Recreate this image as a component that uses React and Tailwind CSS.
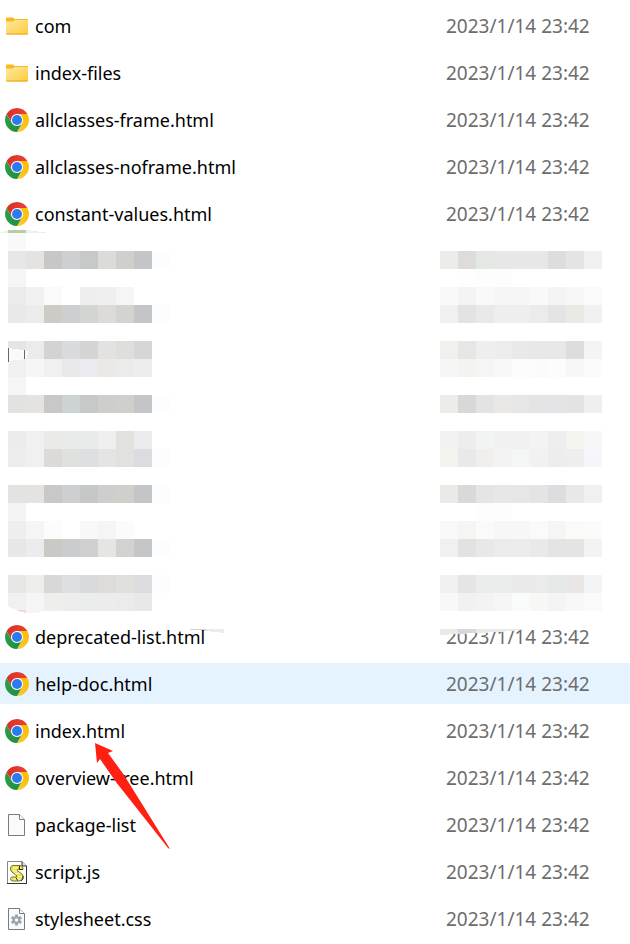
import React from "react";

const DATE = "2023/1/14 23:42";
const CELL = 18;

// ── File icons ────────────────────────────────────────────────────────────────
const FolderIcon = () => (
  <svg width="24" height="24" viewBox="0 0 24 24" aria-hidden="true">
    <defs>
      <linearGradient id="folder" x1="0" y1="0" x2="1" y2="1">
        <stop offset="0" stopColor="#ffe9a3" />
        <stop offset="1" stopColor="#ffca3a" />
      </linearGradient>
    </defs>
    <path d="M1 4.500Q1 3.500 2 3.500H8L9.500 5H22Q23 5 23 6V12H1Z" fill="#f9b81e" />
    <path d="M1 7.500H8L9.500 6H23V19.500Q23 20.500 22 20.500H2Q1 20.500 1 19.500Z" fill="url(#folder)" />
    <path d="M1 19.500H23Q23 20.500 22 20.500H2Q1 20.500 1 19.500Z" fill="#e9a31c" />
  </svg>
);

const ChromeIcon = () => (
  <svg width="24" height="24" viewBox="0 0 48 48" aria-hidden="true">
    <defs>
      <linearGradient id="chrome-red" x1="0" y1="0" x2="1" y2="0">
        <stop offset="0" stopColor="#d93025" />
        <stop offset="1" stopColor="#ea4335" />
      </linearGradient>
      <linearGradient id="chrome-yellow" x1="0" y1="1" x2="1" y2="0">
        <stop offset="0" stopColor="#fcc934" />
        <stop offset="1" stopColor="#fbbc04" />
      </linearGradient>
      <linearGradient id="chrome-green" x1="1" y1="1" x2="0" y2="0">
        <stop offset="0" stopColor="#1e8e3e" />
        <stop offset="1" stopColor="#2f9e4d" />
      </linearGradient>
    </defs>
    <circle cx="24" cy="24" r="12.500" fill="#fff" />
    <path d="M3.220 12A24 24 0 0 1 44.780 12H24A12 12 0 0 0 13.610 30Z" fill="url(#chrome-red)" />
    <path d="M44.780 12A24 24 0 0 1 24 48L34.390 30A12 12 0 0 0 24 12Z" fill="url(#chrome-yellow)" />
    <path d="M24 48A24 24 0 0 1 3.220 12L13.610 30A12 12 0 0 0 34.390 30Z" fill="url(#chrome-green)" />
    <circle cx="24" cy="24" r="10" fill="#2a7bf0" />
  </svg>
);

const Page = () => (
  <>
    <path d="M3.500 1.500H14.500L19.500 6.500V22.500H3.500Z" fill="#fafafa" stroke="#7b7b7b" />
    <path d="M14.500 1.500V6.500H19.500" fill="#fff" stroke="#7b7b7b" />
  </>
);

const BlankIcon = () => (
  <svg width="24" height="24" viewBox="0 0 24 24" aria-hidden="true">
    <Page />
  </svg>
);

const ScriptIcon = () => (
  <svg width="24" height="24" viewBox="0 0 24 24" aria-hidden="true">
    <path d="M2.500 1.500H17L21.500 6V23.500H2.500Z" fill="#fff" stroke="#888" />
    <path d="M17 1.500V6H21.500" fill="#ddd" stroke="#333" />
    <path d="M2 23.500H22M21.500 6V24" fill="none" stroke="#333" />
    <path
      d="M8 5.500H15Q18 5.500 18 8.500V9.500H14.500L13 9L12 10.500L17 14Q19 16 17.500 19Q16.500 21 14 21H8Q5.500 21 5.500 18.500Q5.500 17 8 17H11L12 16L7 12Q5 10 5.500 8Q6 5.500 8 5.500Z"
      fill="#e9e35c"
      stroke="#77752c"
    />
    <path d="M8 8H13M8 11H12M10 13.500H15M13 16.500H17M9 19H15" fill="none" stroke="#fffcae" />
    <path d="M14.500 6V9.500H18M11 17.500L12.500 20.500M18 16V19L16 21" fill="none" stroke="#33331d" />
  </svg>
);

const StyleIcon = () => (
  <svg width="24" height="24" viewBox="0 0 24 24" aria-hidden="true">
    <Page />
    <g stroke="#98a3b0" strokeWidth="2.800">
      <path d="M11.500 7.500V18.500M6.700 10.200L16.300 15.800M16.300 10.200L6.700 15.800" />
    </g>
    <circle cx="11.500" cy="13" r="3.800" fill="#98a3b0" />
    <circle cx="11.500" cy="13" r="1.700" fill="#fafafa" />
  </svg>
);

// ── Pixelated blocks, one string per 18px line, one colour per block ─────────
const NAME_BLOCKS = [
  "f8f9f8",
  "e7e7e7 e4e3e1 c9c7c5 cdcfd1 c7c9c8 dddbd9 cfcfcc c4c5c8 fcfdff",
  "f5f5f5",
  "ebebeb f1f1f1 fafafa ffffff eeeeee efefef f5f5f5",
  "e9e9e7 ececec cccbc6 cdcfd1 d3d5d3 dddbd9 d3d3d0 c4c5c8 fcfdff",
  "",
  "e5e5e3 ebebeb d4d3d1 d8dade d4d4d4 e2e2e0 dededc d6d6d9",
  "f0f0f0 f6f6f6 f0f0f0 e9e9ec e9ebee ebe8e6 ebebeb ededed",
  "f5f5f5",
  "e2e2e0 e4e3e1 c9c8c6 cdd2d4 c7c9c8 d0cecc cfcfcb c4c5c8 fcfdff",
  "",
  "ebebeb f0f0f0 eaeae7 e9eaea e8ebea efefef e1e1df ebebee",
  "ededeb f0f0f0 dcdad8 dfe1df dedfe2 e4e4e4 e1e1df dadcdf fdfdff",
  "",
  "e3e4e2 e4e3e1 c9c8c6 cdcfd1 c5c8c7 d0cecc cfcfcc c4c5c8 fcfdff",
  "f4f4f4",
  "eeeeee f6f4f5 fcfcfc ffffff f8f8f8 f5f5f5 fbfbfb",
  "e7e7e7 ececec cacac4 cacccd d0d0d0 e5e5e3 d2d2d0 c5c6c8 fcfdff",
  "",
  "e6e7e5 eeeeec d9d8d6 dde0e2 d9dadb dddcda e0e0de dadcde fdfdff",
  "f0f0f0 f5f5f5 eeeeec ecedec ebeded ececec ebebeb e8e8e8",
];

const DATE_BLOCKS = [
  "",
  "ecece9 dedcda e4e8e5 e7e7e7 e7e7e7 e7e7e7 dbdedd e5e4e2 eff1f0",
  "ffffff fefefe fdfdfd fdfdfd",
  "f9f9f9 f4f4f4 f9f9f9 f5f5f5 f5f5f5 f9f9f9 f4f4f4 f7f7f5 fafafa",
  "f0f0ee e3e3e3 e9e9e9 eeeeee eeeeee ebebeb e4e4e4 e9e9e6 f1f1f1",
  "",
  "f0f0ed e6e6e6 eeeeee ededed e9e9e9 e8e8e8 e8e8e8 dddddd f4f4f4",
  "f6f6f6 f4f3f0 f5f5f5 f8f8f8 fcfcfc fbfbfb fcfcfc f7f7f7 fafcfb",
  "",
  "ebebe8 d8d8d8 e3e3e3 e9e8e5 e6e6e6 e4e4e4 e2e4e7 e3e3e3 eef0ef",
  "",
  "f0f3f2 ededed f1f4f3 f1f1f1 f1f1f1 f3f3f3 eeeeee f4f4f1 f7f7f7",
  "f4f3f0 e9e9e9 f0efec f3f3f3 f3f6f5 f1f1f1 ededed eeeeee f4f6f9",
  "",
  "ebeae7 d9d9d9 e3e6e4 e7e7e7 e6e6e6 e4e4e4 dcdde0 e9e7e8 eff1f0",
  "ffffff ffffff fdfdfd fdfdfd",
  "f9f9f9 f6f5f2 fafafa f7f7f7 f7f7f7 fafafa f5f5f5 fafaf7 fbfbfb",
  "f0f0f0 e2e2e2 e8e8e8 ebebeb ececec e9e9e9 e4e4e4 e4e4e4 f3f3f3",
  "",
  "f1f1f1 e5e5e5 ebedec ebedec eaeaea ebebeb e6e9e8 e8e7e5 f2f4f6",
  "f8f8f8 f1f1f1 f3f3f3 f6f6f6 fafcfb f7f7f5 f4f4f4 f8f8f8 fafafa",
];

const Blocks = ({ rows, x, y }) =>
  rows.flatMap((row, r) =>
    row.split(" ").filter(Boolean).map((color, c) => (
      <rect
        key={`${r}-${c}`}
        x={x + c * CELL}
        y={y + r * CELL}
        width={CELL}
        height={CELL}
        fill={`#${color}`}
      />
    ))
  );

// Both masks spill a little over the rows above and below them
const NameMask = () => (
  <svg className="absolute -top-2 left-0" width="240" height="412" shapeRendering="crispEdges" aria-hidden="true">
    <Blocks rows={NAME_BLOCKS} x={8} y={4} />
    <path d="M0 4L8 1H26L50 4Z" fill="#edf0ea" />
    <path d="M8 1H26V4H8Z" fill="#b8cda5" />
    <path d="M8 119L29 122L26 130L8 132Z" fill="#fafafa" />
    <path d="M8 119H9V133H8ZM24 121H25V130H24Z" fill="#666" />
    <path d="M8 378L22 382H8Z" fill="#fff" />
    <path d="M15 381H26V384Z" fill="#f7d9da" />
    <path d="M26 382H42L38 384H26Z" fill="#f5f5f5" />
    <path d="M185 396H224V403L206 401Z" fill="#fff" />
    <path d="M185 400H206V402Z" fill="#d2d2d2" />
    <path d="M206 400H224V404L206 402Z" fill="#ebebeb" />
  </svg>
);

const DateMask = () => (
  <svg className="absolute -top-2 -left-[6px]" width="170" height="412" shapeRendering="crispEdges" aria-hidden="true">
    <Blocks rows={DATE_BLOCKS} x={0} y={4} />
    <path d="M0 396H88V400L60 403L0 406Z" fill="#fff" />
    <path d="M0 400H18V405L0 406Z" fill="#e9e9e7" />
    <path d="M18 400H36V404L18 405Z" fill="#d8d8d8" />
    <path d="M36 400H88L60 403L36 404Z" fill="#e9e9e9" />
  </svg>
);

// ── Red pointer at index.html ─────────────────────────────────────────────────
const Arrow = () => (
  <svg className="absolute left-[95px] top-[33px] z-10" width="76" height="107" aria-hidden="true">
    <path d="M0 0L18 8L13 10L29 32L75 106L73 105L21 39L5 16L2 20Z" fill="#ff2014" />
  </svg>
);

// ── Listing ───────────────────────────────────────────────────────────────────
const TOP_FILES = [
  { name: "com", icon: FolderIcon },
  { name: "index-files", icon: FolderIcon },
  { name: "allclasses-frame.html", icon: ChromeIcon },
  { name: "allclasses-noframe.html", icon: ChromeIcon },
  { name: "constant-values.html", icon: ChromeIcon },
];

const BOTTOM_FILES = [
  { name: "deprecated-list.html", icon: ChromeIcon },
  { name: "help-doc.html", icon: ChromeIcon, selected: true },
  { name: "index.html", icon: ChromeIcon, pointed: true },
  { name: "overview-tree.html", icon: ChromeIcon },
  { name: "package-list", icon: BlankIcon },
  { name: "script.js", icon: ScriptIcon },
  { name: "stylesheet.css", icon: StyleIcon },
];

const FileRow = ({ name, icon: Icon, selected, pointed }) => {
  const cell = `h-[47px] border-y-[3px] border-white p-0 ${selected ? "bg-[#e5f3ff]" : ""}`;
  return (
    <tr>
      <td className={`${cell} relative text-lg leading-6 text-black`}>
        <div className="flex items-center gap-[6px] pl-[5px]">
          <Icon />
          <span>{name}</span>
        </div>
        {pointed && <Arrow />}
      </td>
      <td className={`${cell} text-[19px] leading-6 text-[#6d6d6d]`}>{DATE}</td>
    </tr>
  );
};

export default function App() {
  return (
    <main className="bg-white pt-0.5 font-['Noto_Sans','Open_Sans',sans-serif]">
      <table className="w-full table-fixed border-separate border-spacing-0 whitespace-nowrap">
        <colgroup>
          <col />
          <col className="w-[184px]" />
        </colgroup>
        <tbody>
          {TOP_FILES.map((f) => <FileRow key={f.name} {...f} />)}
          <tr>
            <td className="relative h-[376px] p-0"><NameMask /></td>
            <td className="relative h-[376px] p-0"><DateMask /></td>
          </tr>
          {BOTTOM_FILES.map((f) => <FileRow key={f.name} {...f} />)}
        </tbody>
      </table>
    </main>
  );
}
